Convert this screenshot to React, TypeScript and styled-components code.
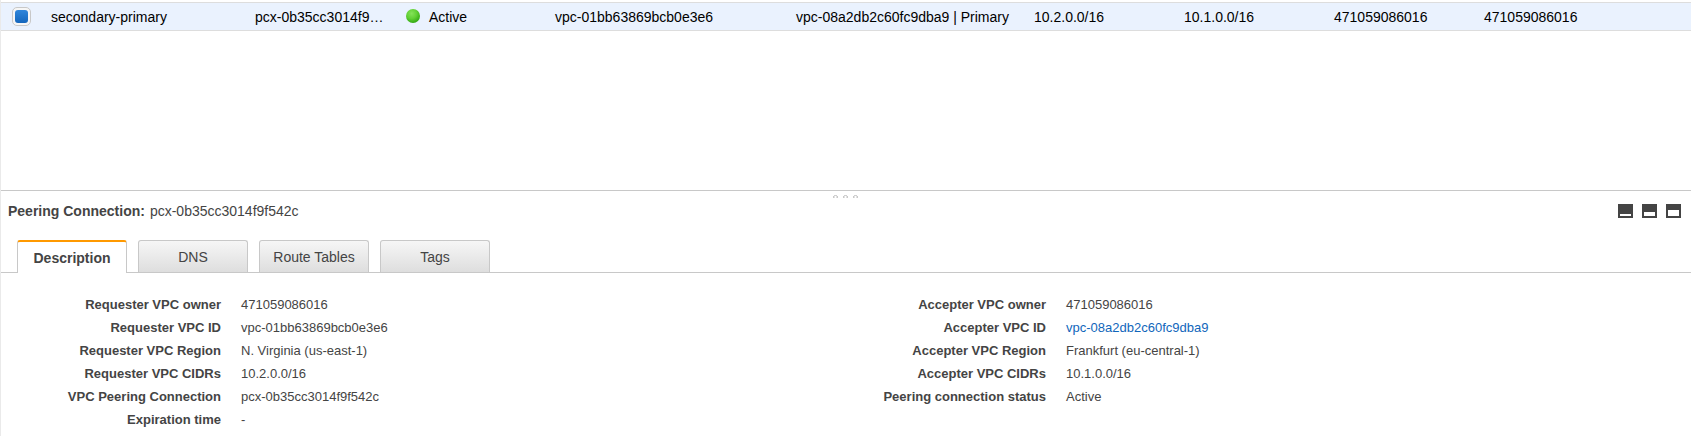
import React from 'react';
import styled, { createGlobalStyle, css } from 'styled-components';

const GlobalStyle = createGlobalStyle`
  * { box-sizing: border-box; }
  body {
    margin: 0;
    background: #fff;
    font-family: "Liberation Sans", Arial, sans-serif;
    font-size: 14px;
    color: #444;
  }
`;

const Page = styled.main`
  display: flex;
  flex-direction: column;
  height: 436px;
  border-left: 1px solid #eaeaea;
  overflow: hidden;
`;

const TableArea = styled.section`
  height: 190px;
  padding-top: 2px;
`;

const Row = styled.div`
  display: grid;
  grid-template-columns: 50px 204px 150px 150px 241px 238px 150px 150px 150px 1fr;
  align-items: start;
  height: 29px;
  border-top: 1px solid #ddd;
  border-bottom: 1px solid #ddd;
  background: #eaf2fe;
  color: #000;
  white-space: nowrap;
`;

const Cell = styled.div`
  display: flex;
  align-items: center;
  height: 28px;
  line-height: 28px;
`;

const CheckCell = styled(Cell)`
  height: 27px;
  padding-left: 11px;
`;

const Checkbox = styled.span`
  display: grid;
  place-items: center;
  width: 19px;
  height: 19px;
  border: 1px solid #c8c8c8;
  border-radius: 5px;
  background: #f6f6f6;
`;

const CheckFill = styled.span`
  width: 13px;
  height: 13px;
  border-radius: 3px;
  background: linear-gradient(#2f86db, #1466bd);
`;

const StatusDot = styled.span`
  width: 14px;
  height: 14px;
  margin: -2px 9px 0 1px;
  border-radius: 50%;
  background: radial-gradient(circle at 40% 32%, #85e259 0, #62d035 40%, #37ad16 72%, #1d8a06 100%);
`;

const DetailPanel = styled.section`
  flex: 1;
  border-top: 1px solid #c8c8c8;
`;

const Grip = styled.div`
  display: flex;
  justify-content: center;
  gap: 5px;
  height: 8px;
  padding: 4px 1px 0 0;
`;

const PanelHeader = styled.header`
  display: flex;
  justify-content: space-between;
  height: 41px;
  padding: 4px 10px 0 7px;
  line-height: 16px;
`;

const Title = styled.div`
  display: flex;
  gap: 5px;
`;

const Layouts = styled.div`
  display: flex;
  gap: 9px;
  padding-top: 1px;
`;

const LayoutButton = styled.span<{ $open: number }>`
  width: 15px;
  height: 14px;
  border: solid #444;
  border-width: ${({ $open }) => 12 - $open}px 2px 2px;
  background: #fff;
`;

const Tabs = styled.nav`
  display: flex;
  gap: 11px;
  height: 33px;
  padding-left: 16px;
  border-bottom: 1px solid #c8c8c8;
`;

const Tab = styled.div<{ $active?: boolean }>`
  width: 110px;
  height: 32px;
  border: 1px solid #c8c8c8;
  border-bottom: 0;
  border-radius: 3px 3px 0 0;
  background: linear-gradient(#f6f6f6, #dedede);
  line-height: 32px;
  text-align: center;
  ${({ $active }) => $active && css`
    height: 33px;
    border-top: 2px solid #f90;
    background: #fff;
    font-weight: bold;
  `}
`;

const Details = styled.div`
  display: grid;
  grid-template-columns: 825px 1fr;
  padding-top: 20px;
  font-size: 13px;
  line-height: 23px;
`;

const Fields = styled.dl`
  display: grid;
  grid-template-columns: 220px 1fr;
  grid-auto-rows: 23px;
  column-gap: 20px;
  align-content: start;
  margin: 0;
`;

const Label = styled.dt`
  font-weight: bold;
  text-align: right;
`;

const Value = styled.dd<{ $link?: boolean }>`
  margin: 0;
  color: ${({ $link }) => ($link ? '#1166bb' : '#444')};
`;

type Field = { label: string; value: string; link?: boolean };

const requester: Field[] = [
  { label: 'Requester VPC owner', value: '471059086016' },
  { label: 'Requester VPC ID', value: 'vpc-01bb63869bcb0e3e6' },
  { label: 'Requester VPC Region', value: 'N. Virginia (us-east-1)' },
  { label: 'Requester VPC CIDRs', value: '10.2.0.0/16' },
  { label: 'VPC Peering Connection', value: 'pcx-0b35cc3014f9f542c' },
  { label: 'Expiration time', value: '-' },
];

const accepter: Field[] = [
  { label: 'Accepter VPC owner', value: '471059086016' },
  { label: 'Accepter VPC ID', value: 'vpc-08a2db2c60fc9dba9', link: true },
  { label: 'Accepter VPC Region', value: 'Frankfurt (eu-central-1)' },
  { label: 'Accepter VPC CIDRs', value: '10.1.0.0/16' },
  { label: 'Peering connection status', value: 'Active' },
];

const FieldList = ({ items }: { items: Field[] }) => (
  <Fields>
    {items.map(({ label, value, link }) => (
      <React.Fragment key={label}>
        <Label>{label}</Label>
        <Value $link={link}>{value}</Value>
      </React.Fragment>
    ))}
  </Fields>
);

const GripMark = () => (
  <svg width="5" height="3" viewBox="0 0 5 3" shapeRendering="crispEdges">
    <path d="M1 0h3v1H1z" fill="#d0d0d0" />
    <path d="M0 1h1v2H0zM4 1h1v2H4z" fill="#c8c8c8" />
    <path d="M1 1h1v2H1zM3 1h1v2H3z" fill="#e2e2e2" />
  </svg>
);

export default function App() {
  return (
    <>
      <GlobalStyle />
      <Page>
        <TableArea>
          <Row>
            <CheckCell>
              <Checkbox><CheckFill /></Checkbox>
            </CheckCell>
            <Cell>secondary-primary</Cell>
            <Cell>pcx-0b35cc3014f9…</Cell>
            <Cell><StatusDot />Active</Cell>
            <Cell>vpc-01bb63869bcb0e3e6</Cell>
            <Cell>vpc-08a2db2c60fc9dba9 | Primary</Cell>
            <Cell>10.2.0.0/16</Cell>
            <Cell>10.1.0.0/16</Cell>
            <Cell>471059086016</Cell>
            <Cell>471059086016</Cell>
          </Row>
        </TableArea>
        <DetailPanel>
          <Grip><GripMark /><GripMark /><GripMark /></Grip>
          <PanelHeader>
            <Title><b>Peering Connection:</b><span>pcx-0b35cc3014f9f542c</span></Title>
            <Layouts>
              <LayoutButton $open={2} />
              <LayoutButton $open={4} />
              <LayoutButton $open={6} />
            </Layouts>
          </PanelHeader>
          <Tabs>
            <Tab $active>Description</Tab>
            <Tab>DNS</Tab>
            <Tab>Route Tables</Tab>
            <Tab>Tags</Tab>
          </Tabs>
          <Details>
            <FieldList items={requester} />
            <FieldList items={accepter} />
          </Details>
        </DetailPanel>
      </Page>
    </>
  );
}
